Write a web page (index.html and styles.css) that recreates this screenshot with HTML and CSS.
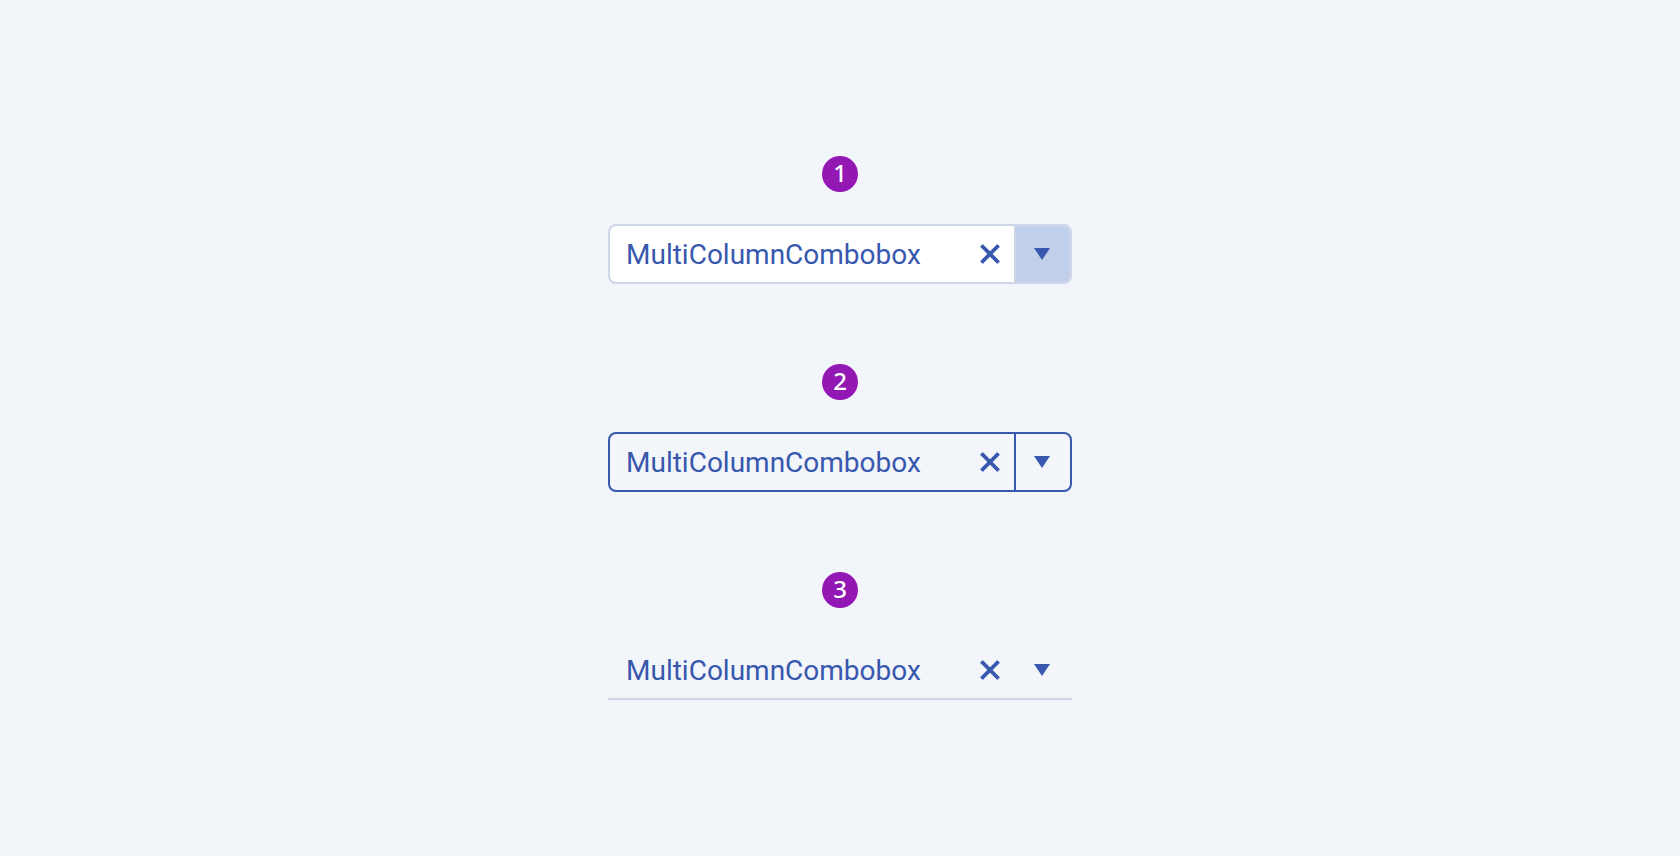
FILE: index.html
```
<!DOCTYPE html>
<html lang="en">
<head>
<meta charset="utf-8">
<title>MultiColumnComboBox fill modes</title>
<link rel="stylesheet" href="styles.css">
</head>
<body>
<main class="stage">
  <section class="sample">
    <span class="badge">1</span>
    <div class="combo combo-solid">
      <input class="combo-input" type="text" value="MultiColumnCombobox" aria-label="Solid combobox">
      <button class="combo-clear" type="button" aria-label="Clear"><svg class="icon" viewBox="0 0 24 24"><path class="cross" d="M4.8 2.6L12 9.8L19.2 2.6L21.4 4.8L14.2 12L21.4 19.2L19.2 21.4L12 14.2L4.8 21.4L2.6 19.2L9.8 12L2.6 4.8Z"/></svg></button>
      <button class="combo-toggle" type="button" aria-label="Open"><svg class="icon" viewBox="0 0 24 24"><path class="caret" d="M4 6H20L12 18Z"/></svg></button>
    </div>
  </section>
  <section class="sample">
    <span class="badge">2</span>
    <div class="combo combo-outline">
      <input class="combo-input" type="text" value="MultiColumnCombobox" aria-label="Outline combobox">
      <button class="combo-clear" type="button" aria-label="Clear"><svg class="icon" viewBox="0 0 24 24"><path class="cross" d="M4.8 2.6L12 9.8L19.2 2.6L21.4 4.8L14.2 12L21.4 19.2L19.2 21.4L12 14.2L4.8 21.4L2.6 19.2L9.8 12L2.6 4.8Z"/></svg></button>
      <button class="combo-toggle" type="button" aria-label="Open"><svg class="icon" viewBox="0 0 24 24"><path class="caret" d="M4 6H20L12 18Z"/></svg></button>
    </div>
  </section>
  <section class="sample">
    <span class="badge">3</span>
    <div class="combo combo-flat">
      <input class="combo-input" type="text" value="MultiColumnCombobox" aria-label="Flat combobox">
      <button class="combo-clear" type="button" aria-label="Clear"><svg class="icon" viewBox="0 0 24 24"><path class="cross" d="M4.8 2.6L12 9.8L19.2 2.6L21.4 4.8L14.2 12L21.4 19.2L19.2 21.4L12 14.2L4.8 21.4L2.6 19.2L9.8 12L2.6 4.8Z"/></svg></button>
      <button class="combo-toggle" type="button" aria-label="Open"><svg class="icon" viewBox="0 0 24 24"><path class="caret" d="M4 6H20L12 18Z"/></svg></button>
    </div>
  </section>
</main>
</body>
</html>
```
FILE: styles.css
```
* {
  box-sizing: border-box;
}

body {
  margin: 0;
  background: #f2f5fa;
  color: #3858ae;
  font-family: Roboto, sans-serif;
}

.stage {
  min-height: 100vh;
  display: flex;
  flex-direction: column;
  align-items: center;
  justify-content: center;
  gap: 80px;
}

.sample {
  width: 100%;
  max-width: 464px;
  display: flex;
  flex-direction: column;
  align-items: center;
  gap: 32px;
}

.badge {
  width: 36px;
  height: 36px;
  border-radius: 50%;
  background: #9318b3;
  color: #fff;
  font-family: "Noto Sans", sans-serif;
  font-size: 24px;
  font-weight: 500;
  line-height: 34px;
  text-align: center;
}

.combo {
  --line: #cfd6ea;
  width: 100%;
  display: flex;
  border: 2px solid var(--line);
  border-radius: 8px;
  overflow: hidden;
}

.combo-input {
  flex: 1;
  min-width: 0;
  height: 56px;
  padding: 0 16px;
  border: 0;
  outline: 0;
  background: transparent;
  color: inherit;
  font: 400 28px/40px Roboto, sans-serif;
}

.combo-clear,
.combo-toggle {
  display: flex;
  align-items: center;
  justify-content: center;
  padding: 0;
  border: 0;
  background: transparent;
  color: inherit;
}

.combo-clear {
  width: 48px;
}

.combo-toggle {
  width: 56px;
  padding-right: 2px;
  border-left: 2px solid var(--line);
}

.combo-solid {
  background: #fff;
}

.combo-solid .combo-toggle {
  background: #c1cfea;
}

.combo-outline {
  --line: #3858ae;
}

.combo-flat {
  border-color: transparent transparent var(--line);
  border-width: 2px 0;
  border-radius: 0;
  padding: 0 2px;
}

.combo-flat .combo-toggle {
  border-color: transparent;
}

.icon {
  width: 24px;
  height: 24px;
}

.cross {
  fill: currentColor;
  stroke: currentColor;
  stroke-width: 1;
  stroke-linejoin: round;
}

.caret {
  fill: currentColor;
}
```
